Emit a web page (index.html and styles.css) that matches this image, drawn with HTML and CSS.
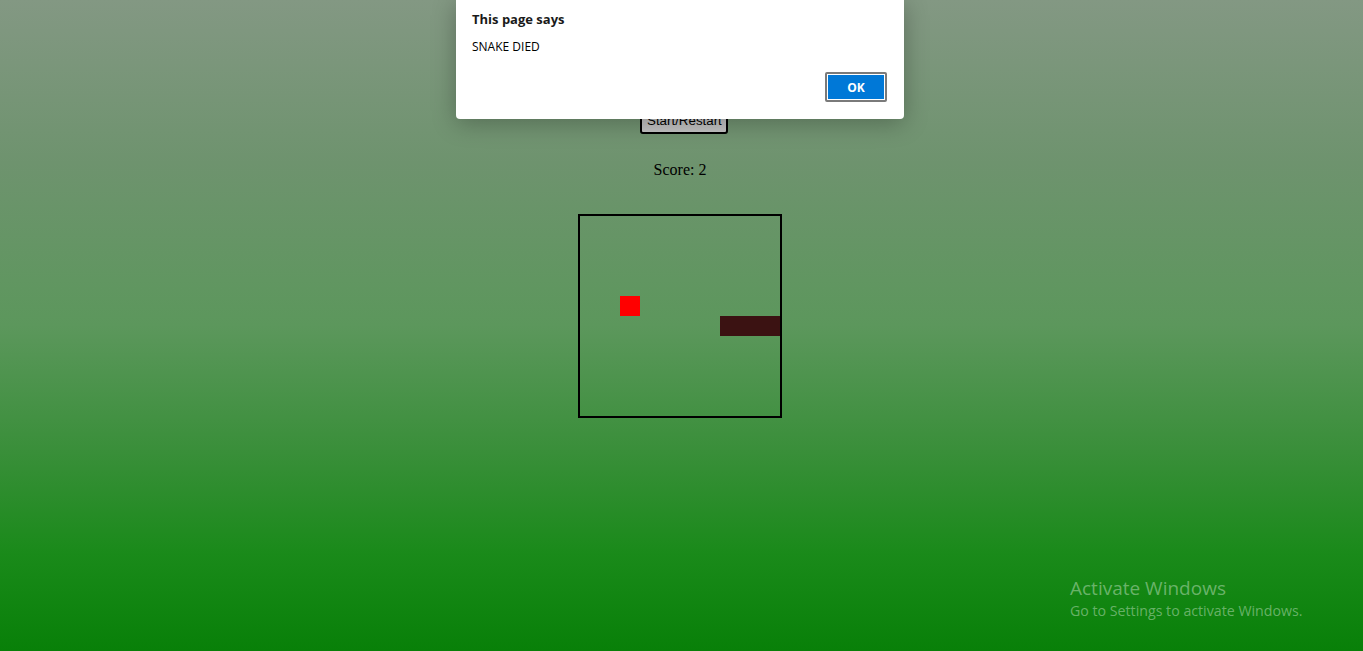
FILE: index.html
```html
<!DOCTYPE html>
<html lang="en">
<head>
<meta charset="utf-8">
<title>Snake</title>
<link rel="stylesheet" href="styles.css">
</head>
<body>
<main class="game">
  <button class="restart">Start/Restart</button>
  <p class="score">Score: 2</p>
  <div class="board">
    <svg width="200" height="200" viewBox="0 0 200 200">
      <rect x="40" y="80" width="20" height="20" fill="#ff0000"/>
      <rect x="140" y="100" width="60" height="20" fill="#3b1212"/>
    </svg>
  </div>
</main>

<div class="dialog">
  <div class="dialog-title">This page says</div>
  <div class="dialog-msg">SNAKE DIED</div>
  <div class="dialog-actions"><button class="ok">OK</button></div>
</div>

<div class="watermark">
  <div class="wm-title">Activate Windows</div>
  <div class="wm-sub">Go to Settings to activate Windows.</div>
</div>
</body>
</html>
```
FILE: styles.css
```css
html, body {
  margin: 0;
  height: 100%;
}
body {
  font-family: "Liberation Serif", "Times New Roman", serif;
  background: linear-gradient(to bottom,
    #839883 0%,
    #6e936e 25%,
    #5c975c 50%,
    #3a8f3a 69%,
    #1a8a1a 85%,
    #088008 100%);
  overflow: hidden;
}
.game {
  width: 1360px;
  display: flex;
  flex-direction: column;
  align-items: center;
  padding-top: 110px;
}
.restart {
  margin: 0 0 0 8px;
  font-family: "Liberation Sans", Arial, sans-serif;
  font-size: 13.33px;
  line-height: 15px;
  padding: 0 5px 4px;
  width: 88px;
  height: 24px;
  background: #c3c3c3;
  color: #000;
  border: 2px solid #000;
  border-radius: 3px;
}
.score {
  margin: 27px 0 0;
  font-size: 16px;
  line-height: 18px;
  color: #000;
}
.board {
  margin-top: 35px;
  width: 200px;
  height: 200px;
  border: 2px solid #000;
}
.board svg {
  display: block;
}
.dialog {
  position: absolute;
  left: 456px;
  top: 0;
  width: 448px;
  height: 119px;
  box-sizing: border-box;
  background: #fff;
  border-radius: 0 0 4px 4px;
  box-shadow: 0 4px 24px rgba(0, 0, 0, 0.28);
  padding: 11px 16px 0 16px;
  font-family: "Open Sans", "Noto Sans", sans-serif;
  color: #000;
}
.dialog-title {
  font-weight: 700;
  font-size: 13px;
  line-height: 16px;
  color: #1a1a1a;
}
.dialog-msg {
  margin-top: 12px;
  font-size: 12px;
  line-height: 16px;
}
.dialog-actions {
  display: flex;
  justify-content: flex-end;
  margin-top: 17px;
  padding-right: 1px;
}
.ok {
  width: 62px;
  height: 30px;
  box-sizing: border-box;
  background: #0078d7;
  color: #fff;
  border: 2px solid #7a7a7a;
  box-shadow: inset 0 0 0 1px #fff;
  border-radius: 2px;
  font-family: "Open Sans", "Noto Sans", sans-serif;
  font-weight: 700;
  font-size: 12px;
  padding: 0;
}
.watermark {
  position: absolute;
  left: 1070px;
  top: 576px;
  font-family: "Open Sans", "Noto Sans", sans-serif;
  color: rgba(215, 235, 215, 0.45);
}
.wm-title {
  font-size: 19px;
  line-height: 25px;
}
.wm-sub {
  font-size: 14.2px;
  line-height: 20px;
}
```
